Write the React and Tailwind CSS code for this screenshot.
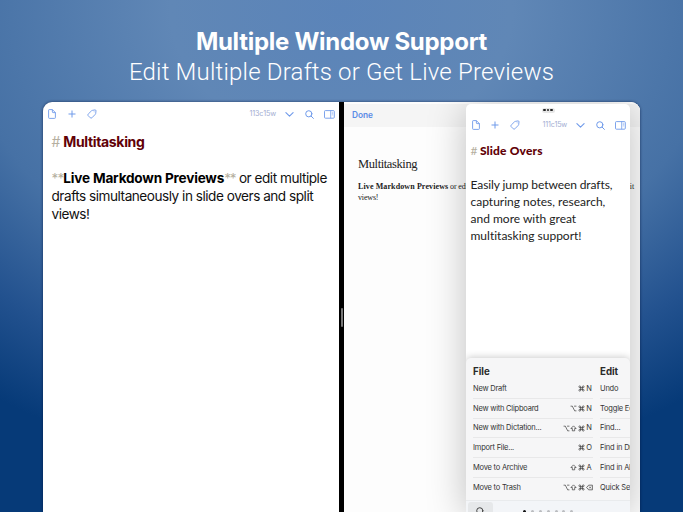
const blue = "text-[#6f9aea]";

function DocIcon() {
  return (
    <svg width="8" height="10" viewBox="0 0 8 10" fill="none" stroke="currentColor" strokeWidth="0.9" strokeLinejoin="round">
      <path d="M1.2.6h3.2l3 3v5c0 .5-.3.8-.8.8H1.4c-.5 0-.8-.3-.8-.8V1.2c0-.4.2-.6.6-.6z" />
      <path d="M4.4.6v2.3c0 .5.2.7.7.7h2.3" />
    </svg>
  );
}

function PlusIcon() {
  return (
    <svg width="8" height="8" viewBox="0 0 8 8" fill="none" stroke="currentColor" strokeWidth="1">
      <path d="M4 .5v7M.5 4h7" />
    </svg>
  );
}

function TagIcon() {
  return (
    <svg width="10" height="10" viewBox="0 0 10 10" fill="none" stroke="currentColor" strokeWidth="0.9" strokeLinejoin="round">
      <path d="M5.3 1.4 8 .9c.6-.1 1 .3 1 .9l-.3 2.6c0 .4-.2.7-.4.9L4.9 8.8c-.5.5-1.1.5-1.6 0L1.2 6.7c-.5-.5-.5-1.1 0-1.6l3.3-3.3c.2-.2.5-.4.8-.4z" />
      <path d="M7.1 2.8h.1" strokeWidth=".6" strokeLinecap="round" />
    </svg>
  );
}

function ChevronIcon() {
  return (
    <svg width="9" height="5" viewBox="0 0 9 5" fill="none" stroke="currentColor" strokeWidth="1.1" strokeLinecap="round" strokeLinejoin="round">
      <path d="M.9.6 4.5 4.2 8.1.6" />
    </svg>
  );
}

function SearchIcon({ size = 9 }) {
  return (
    <svg width={size} height={size} viewBox="0 0 9 9" fill="none" stroke="currentColor" strokeWidth="1" strokeLinecap="round">
      <circle cx="3.8" cy="3.8" r="3.1" />
      <path d="m6.1 6.1 2.3 2.3" />
    </svg>
  );
}

function SidebarIcon() {
  return (
    <svg width="11" height="9" viewBox="0 0 11 9" fill="none" stroke="currentColor" strokeWidth="0.9">
      <rect x=".5" y=".6" width="9.8" height="7.6" rx=".9" />
      <path d="M6.7.6v7.6" strokeWidth=".8" />
      <path d="M7.8 2.3h1.4M7.8 3.6h1.4M7.8 4.9h1.4" strokeWidth=".5" />
    </svg>
  );
}

function Toolbar({ count, gap }) {
  return (
    <div className={`flex h-[10px] items-center justify-between ${blue}`}>
      <div className="flex items-center">
        <DocIcon />
        <span className="ml-[11.5px]"><PlusIcon /></span>
        <span className="ml-[11px]"><TagIcon /></span>
      </div>
      <div className="flex items-center">
        <span className={`text-[7.2px] leading-[10px] text-[#a3aed2] ${gap}`}>{count}</span>
        <ChevronIcon />
        <span className="ml-[11px]"><SearchIcon /></span>
        <span className="ml-[10px]"><SidebarIcon /></span>
      </div>
    </div>
  );
}

const modifierPaths = {
  cmd: "M15 6v12a3 3 0 1 0 3-3H6a3 3 0 1 0 3 3V6a3 3 0 1 0-3 3h12a3 3 0 1 0-3-3",
  opt: "M2 4h6l8 16h6M14 4h8",
  shift: "M12 3 21 12h-5v8H8v-8H3z",
  del: "M9 4h13v16H9l-7-8zM11 9l6 6M17 9l-6 6",
};

function Modifier({ name }) {
  return (
    <svg width="7" height="7" viewBox="0 0 24 24" fill="none" stroke="currentColor" strokeWidth="2.3">
      <path d={modifierPaths[name]} />
    </svg>
  );
}

const fileItems = [
  ["New Draft", ["cmd"], "N"],
  ["New with Clipboard", ["opt", "cmd"], "N"],
  ["New with Dictation...", ["opt", "shift", "cmd"], "N"],
  ["Import File...", ["cmd"], "O"],
  ["Move to Archive", ["shift", "cmd"], "A"],
  ["Move to Trash", ["opt", "shift", "cmd", "del"], ""],
];
const editItems = ["Undo", "Toggle Editing", "Find...", "Find in Draft", "Find in All", "Quick Search"];

function CommandSheet() {
  return (
    <div className="flex h-[154px] w-full flex-col overflow-hidden rounded-t-[5px] bg-[#f6f6f7] text-[#333] shadow-[0_-1px_7px_rgba(0,0,0,0.2)]">
      <div className="flex h-[143px] shrink-0 border-b border-[#e9ebed] pl-[7px]">
        <div className="w-[119.5px] shrink-0">
          <div className="h-[21.3px] pt-[7px] text-[9.7px] font-bold leading-[14px] text-[#2a2a2a]">File</div>
          {fileItems.map(([label, mods, key], i) => (
            <div key={label} className={`flex h-[19.7px] items-center justify-between text-[7.5px] tracking-[-0.22px] ${i < 5 ? "border-b border-[#e8e8e9]" : ""}`}>
              <span className="whitespace-nowrap">{label}</span>
              <span className="flex items-center gap-[0.6px]">
                {mods.map((m) => <Modifier key={m} name={m} />)}
                {key && <span className="w-[7px] text-center">{key}</span>}
              </span>
            </div>
          ))}
        </div>
        <div className="ml-[7.5px] w-[60px] shrink-0">
          <div className="h-[21.3px] pt-[7px] text-[9.7px] font-bold leading-[14px] text-[#2a2a2a]">Edit</div>
          {editItems.map((label, i) => (
            <div key={label} className={`flex h-[19.7px] items-center whitespace-nowrap text-[7.5px] tracking-[-0.2px] ${i < 5 ? "border-b border-[#e8e8e9]" : ""}`}>
              {label}
            </div>
          ))}
        </div>
      </div>
      <div className="flex h-[12px] shrink-0 bg-[#f3f5f8] pt-[1px]">
        <div className="ml-[2px] flex h-[14px] w-[25px] justify-center rounded-[3px] bg-[#e6e8ea] pt-[5px] text-[#444]">
          <SearchIcon size={9} />
        </div>
        <div className="ml-[30px] flex gap-[4.9px] pt-[7.5px]">
          {[0, 1, 2, 3, 4, 5, 6].map((n) => (
            <span key={n} className={`size-[3px] rounded-full ${n === 0 ? "bg-[#111]" : "bg-[#babcbf]"}`} />
          ))}
        </div>
      </div>
    </div>
  );
}

function SlideOver() {
  return (
    <div className="absolute left-[423.5px] top-[2.5px] flex h-[408px] w-[164px] flex-col overflow-hidden rounded-t-[5px] bg-white font-[Inter,sans-serif] shadow-[0_4px_38px_rgba(0,0,0,0.25)]">
      <div className="flex h-[15px] shrink-0 justify-center pt-[3.5px]">
        <div className="flex h-[5px] w-[13px] items-center justify-center gap-[1px] rounded-full bg-[#e6e6e6]">
          <span className="size-[2.5px] rounded-full bg-[#222]" />
          <span className="size-[2.5px] rounded-full bg-[#222]" />
          <span className="size-[2.5px] rounded-full bg-[#222]" />
        </div>
      </div>
      <div className="pl-[5.5px] pr-[4px] pt-[1px]"><Toolbar count="111c15w" gap="tracking-[-0.2px] mr-[9px]" /></div>
      <div className="flex-1 pl-[4.5px] pt-[12px] font-[Lato,sans-serif] [font-variant-ligatures:none]">
        <div className="text-[12px] font-black leading-[17px] tracking-[0.15px] text-[#610006]"><span className="tracking-[-0.3px] font-normal text-[#b5afa0]"># </span>Slide Overs</div>
        <div className="mt-[17px] whitespace-pre text-[12px] leading-[17.1px] text-[#222]">
          <div className="tracking-[-0.09px]">Easily jump between drafts,</div>
          {"capturing notes, research,\nand more with great\nmultitasking support!"}
        </div>
      </div>
      <CommandSheet />
    </div>
  );
}

export default function App() {
  return (
    <div className="flex h-[512px] w-[683px] flex-col overflow-hidden bg-[radial-gradient(ellipse_610px_470px_at_50%_2%,#5b84b9_0%,#6087b6_28%,#4671a5_62%,#23528f_82%,#063a78_100%)] font-[Inter,sans-serif]">
      <div className="flex h-[101.5px] shrink-0 flex-col items-center pt-[27px] text-white">
        <h1 className="whitespace-nowrap text-[24px] font-bold leading-[30px] tracking-[-0.28px]">Multiple Window Support</h1>
        <h2 className="whitespace-nowrap font-[Roboto,sans-serif] text-[24px] font-light leading-[30px] tracking-[0.2px]">Edit Multiple Drafts or Get Live Previews</h2>
      </div>
      <div className="relative ml-[42.5px] flex h-[411px] w-[597.5px] overflow-hidden rounded-t-[9px] bg-white shadow-[0_0_3px_rgba(0,20,60,0.7)]">
        <div className="w-[296.5px] shrink-0 pt-[7.5px]">
          <div className="pl-[5.5px] pr-[4px]"><Toolbar count="113c15w" gap="tracking-[-0.1px] mr-[9px]" /></div>
          <div className="pl-[9px] pt-[12.5px]">
            <div className="text-[14px] font-bold leading-[19px] tracking-[-0.35px] text-[#610006]"><span className="tracking-[-0.5px] font-normal text-[#b5afa0]"># </span>Multitasking</div>
            <div className="mt-[18px] whitespace-pre text-[13.6px] leading-[18.3px] tracking-[-0.48px] text-[#111]">
              <span className="tracking-[-0.9px] text-[#b5afa0]">**</span><b className="tracking-[-0.2px] text-black">Live Markdown Previews</b><span className="tracking-[-1.1px] text-[#b5afa0]">**</span>{" or edit multiple\ndrafts simultaneously in slide overs and split\nviews!"}
            </div>
          </div>
        </div>
        <div className="flex w-[5px] shrink-0 items-center justify-center bg-black pt-[22px]">
          <div className="h-[19px] w-[2px] rounded-full bg-[#777]" />
        </div>
        <div className="flex-1 bg-[#fdfdfd]">
          <div className="mt-[2px] flex h-[23px] items-center bg-[#f5f5f5] pl-[8px] pt-[1px] text-[8.3px] font-semibold text-[#5a8be6]">Done</div>
          <div className="pl-[14px] pt-[27.5px] font-['Liberation_Serif',serif] text-[#222]">
            <div className="text-[12.5px] leading-[20px] tracking-[-0.4px]">Multitasking</div>
            <div className="mt-[8px] whitespace-pre text-[8px] leading-[10.5px] tracking-[-0.16px]"><b className="tracking-[0.11px]">Live Markdown Previews</b>{" or edit multiple drafts simultaneously in slide overs and split\nviews!"}</div>
          </div>
        </div>
        <SlideOver />
      </div>
    </div>
  );
}
